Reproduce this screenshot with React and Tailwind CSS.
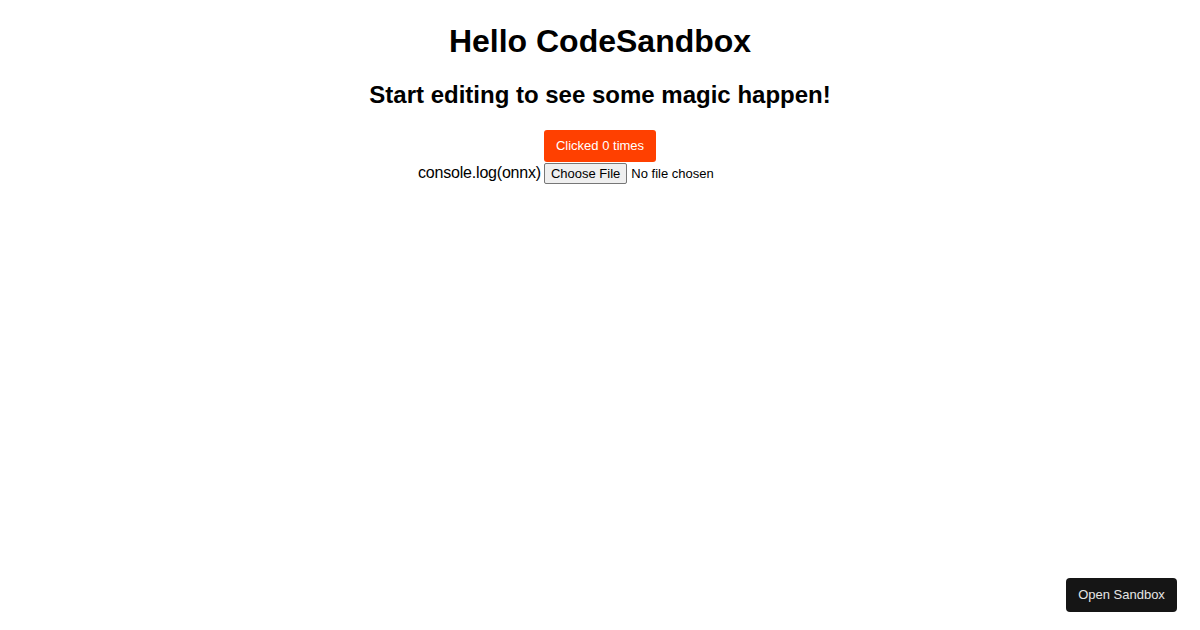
import React, { useState } from 'react';

const App = () => {
  const [count, setCount] = useState(0);

  return (
    <div className="min-h-screen bg-white text-black font-['Liberation_Sans',Arial,sans-serif] text-center">
      <h1 className="pt-[23px] text-[32px] leading-[37px] font-bold">Hello CodeSandbox</h1>
      <h2 className="mt-[21px] text-[24px] leading-[28px] font-bold">
        Start editing to see some magic happen!
      </h2>

      <div className="mt-[21px] flex justify-center">
        <button
          onClick={() => setCount(count + 1)}
          className="h-[32px] w-[112px] rounded-[3px] bg-[#ff4000] text-[13px] text-white"
        >
          Clicked {count} times
        </button>
      </div>

      <div className="flex h-[22px] items-center justify-center text-[16px]">
        <span className="tracking-[-0.2px]">console.log(onnx)</span>
        <input
          type="file"
          className="ml-[3px] w-[238px] text-left text-[13px] file:mr-[4px] file:h-[21px] file:rounded-[2px] file:border file:border-[#767676] file:bg-[#efefef] file:px-[6px] file:text-[13px] file:text-black"
        />
      </div>

      {/* Sandbox link */}
      <a
        href="#"
        className="fixed bottom-[18px] right-[23px] flex h-[34px] w-[111px] items-center justify-center rounded-[4px] bg-[#151515] text-[13px] text-[#e5e5e5]"
      >
        Open Sandbox
      </a>
    </div>
  );
};

export default App;
